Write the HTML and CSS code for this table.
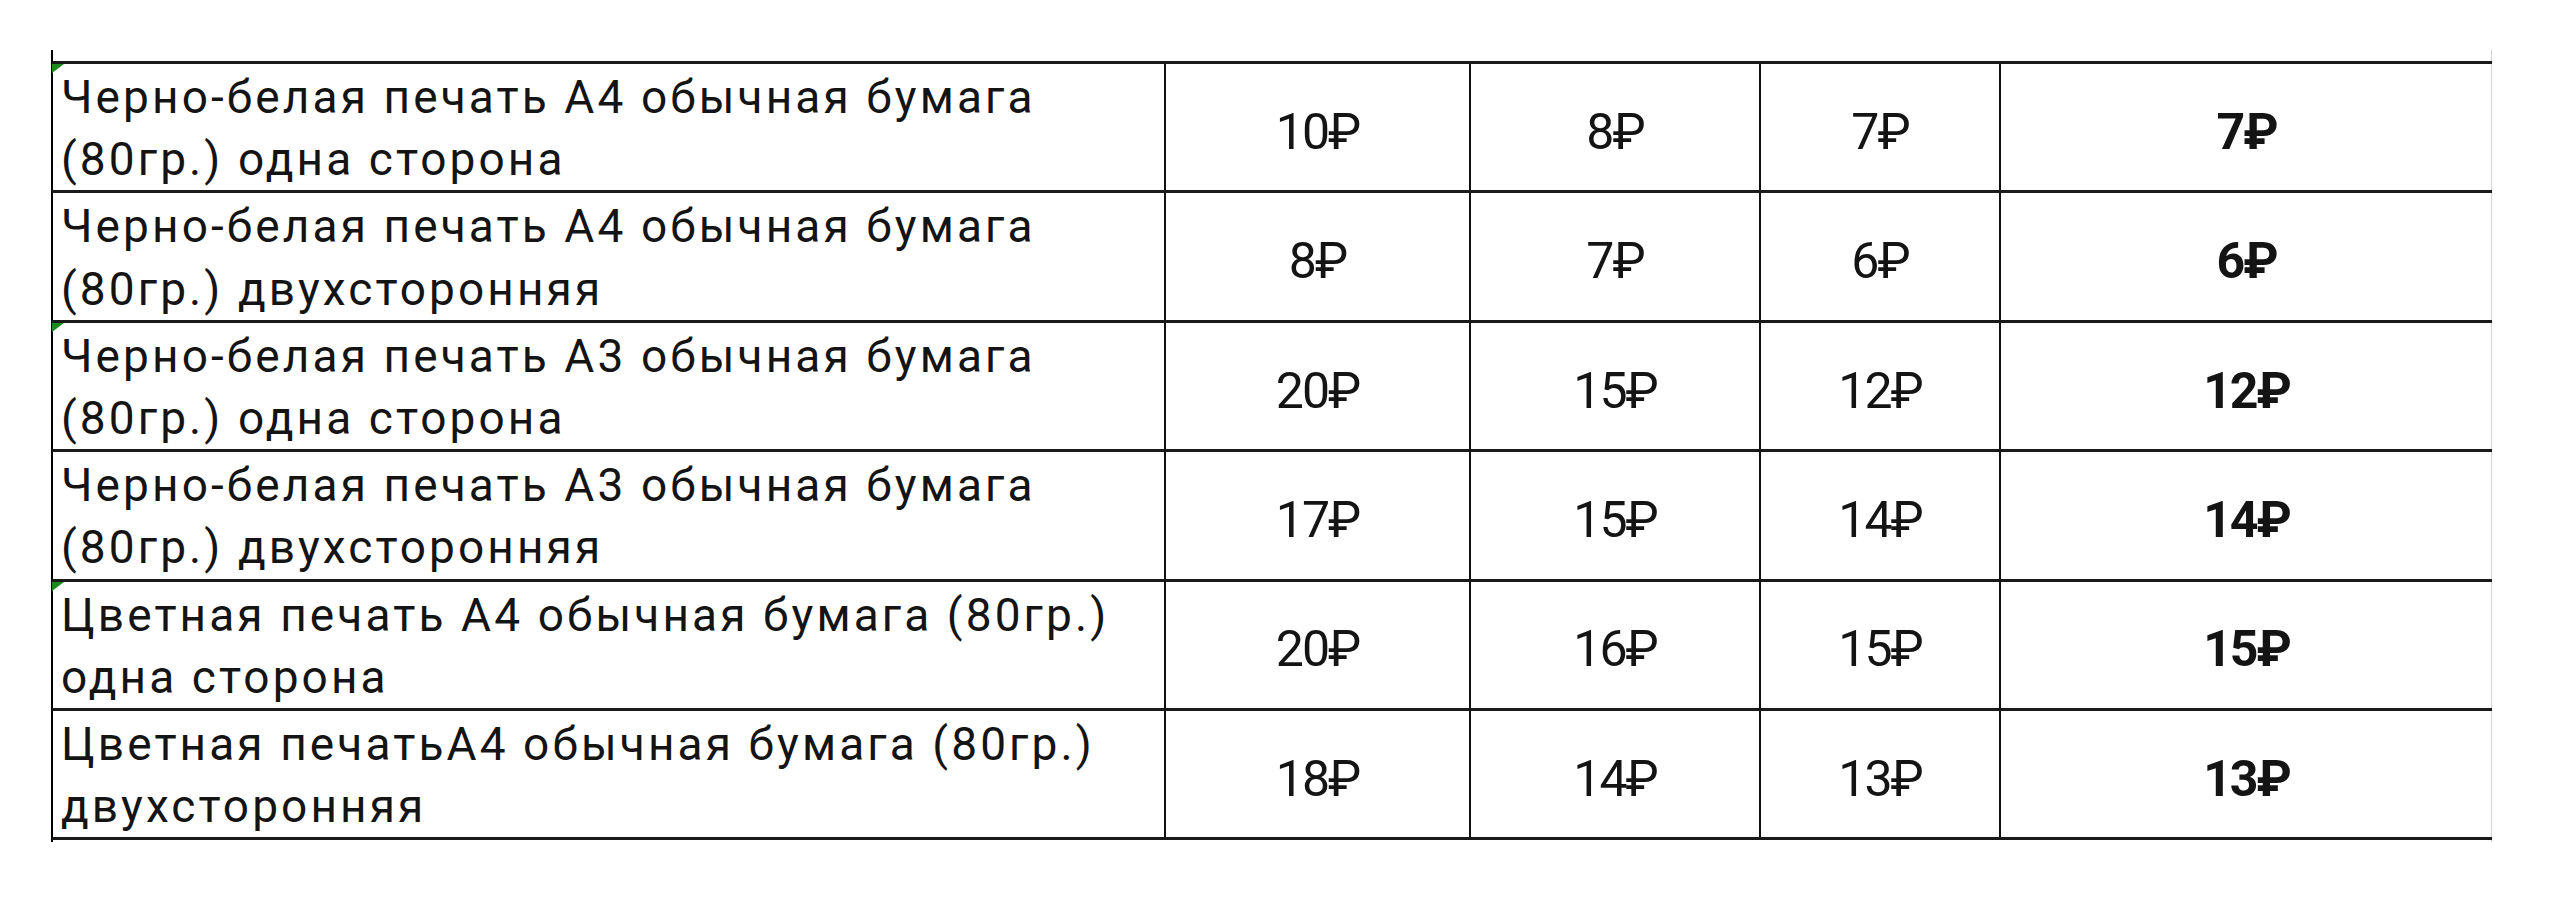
FILE: index.html
```html
<!DOCTYPE html>
<html lang="ru">
<head>
<meta charset="utf-8">
<title>Цены на печать</title>
<link rel="stylesheet" href="styles.css">
</head>
<body>
<div class="sheet">
  <div class="frame">
    <table class="prices">
      <colgroup>
        <col class="c-name"><col class="c-p1"><col class="c-p2"><col class="c-p3"><col class="c-p4">
      </colgroup>
      <tbody>
        <tr>
          <td class="name mark">Черно-белая печать А4 обычная бумага<br>(80гр.) одна сторона</td>
          <td class="price">10₽</td><td class="price">8₽</td><td class="price">7₽</td><td class="price best">7₽</td>
        </tr>
        <tr>
          <td class="name">Черно-белая печать А4 обычная бумага<br>(80гр.) двухсторонняя</td>
          <td class="price">8₽</td><td class="price">7₽</td><td class="price">6₽</td><td class="price best">6₽</td>
        </tr>
        <tr>
          <td class="name mark">Черно-белая печать А3 обычная бумага<br>(80гр.) одна сторона</td>
          <td class="price">20₽</td><td class="price">15₽</td><td class="price">12₽</td><td class="price best">12₽</td>
        </tr>
        <tr>
          <td class="name">Черно-белая печать А3 обычная бумага<br>(80гр.) двухсторонняя</td>
          <td class="price">17₽</td><td class="price">15₽</td><td class="price">14₽</td><td class="price best">14₽</td>
        </tr>
        <tr>
          <td class="name mark">Цветная печать А4 обычная бумага (80гр.)<br>одна сторона</td>
          <td class="price">20₽</td><td class="price">16₽</td><td class="price">15₽</td><td class="price best">15₽</td>
        </tr>
        <tr>
          <td class="name">Цветная печатьА4 обычная бумага (80гр.)<br>двухсторонняя</td>
          <td class="price">18₽</td><td class="price">14₽</td><td class="price">13₽</td><td class="price best">13₽</td>
        </tr>
      </tbody>
    </table>
  </div>
</div>
</body>
</html>
```
FILE: styles.css
```css
html, body {
  margin: 0;
  padding: 0;
  background: #ffffff;
}

body {
  width: 2559px;
  height: 921px;
  overflow: hidden;
  font-family: Roboto, "Liberation Sans", sans-serif;
  color: #141414;
}

.sheet {
  padding: 50px 0 0 51px;
}

.frame {
  width: 2441px;
  padding-top: 11px;
  padding-bottom: 2px;
  border-left: 2px solid #000000;
  border-right: 1px solid #d4d4d4;
  box-sizing: border-box;
}

.prices {
  border-collapse: collapse;
  table-layout: fixed;
  width: 2440px;
  margin-left: -1px;
}

.c-name { width: 1113px; }
.c-p1 { width: 305px; }
.c-p2 { width: 290px; }
.c-p3 { width: 240px; }
.c-p4 { width: 492px; }

.prices tr {
  height: 126px;
}

.prices td {
  border-top: 3px solid #1a1a1a;
  border-bottom: 3px solid #1a1a1a;
  border-left: 2px solid #111111;
  border-right: 2px solid #111111;
  padding: 0;
  vertical-align: middle;
}

.prices td:first-child {
  border-left: 0;
}

.prices td:last-child {
  border-right: 0;
}

.name {
  position: relative;
  padding-left: 9px !important;
  padding-top: 2px !important;
  font-size: 46px;
  line-height: 62.2px;
  letter-spacing: 3.1px;
  text-align: left;
  white-space: nowrap;
}

.mark::before {
  content: "";
  position: absolute;
  top: 0;
  left: 0;
  width: 0;
  height: 0;
  border-top: 9px solid #1e8a1e;
  border-right: 12px solid transparent;
}

.price {
  font-size: 50px;
  line-height: 62px;
  letter-spacing: -2px;
  text-align: center;
  padding-top: 9px !important;
}

.best {
  font-weight: 700;
}
```
